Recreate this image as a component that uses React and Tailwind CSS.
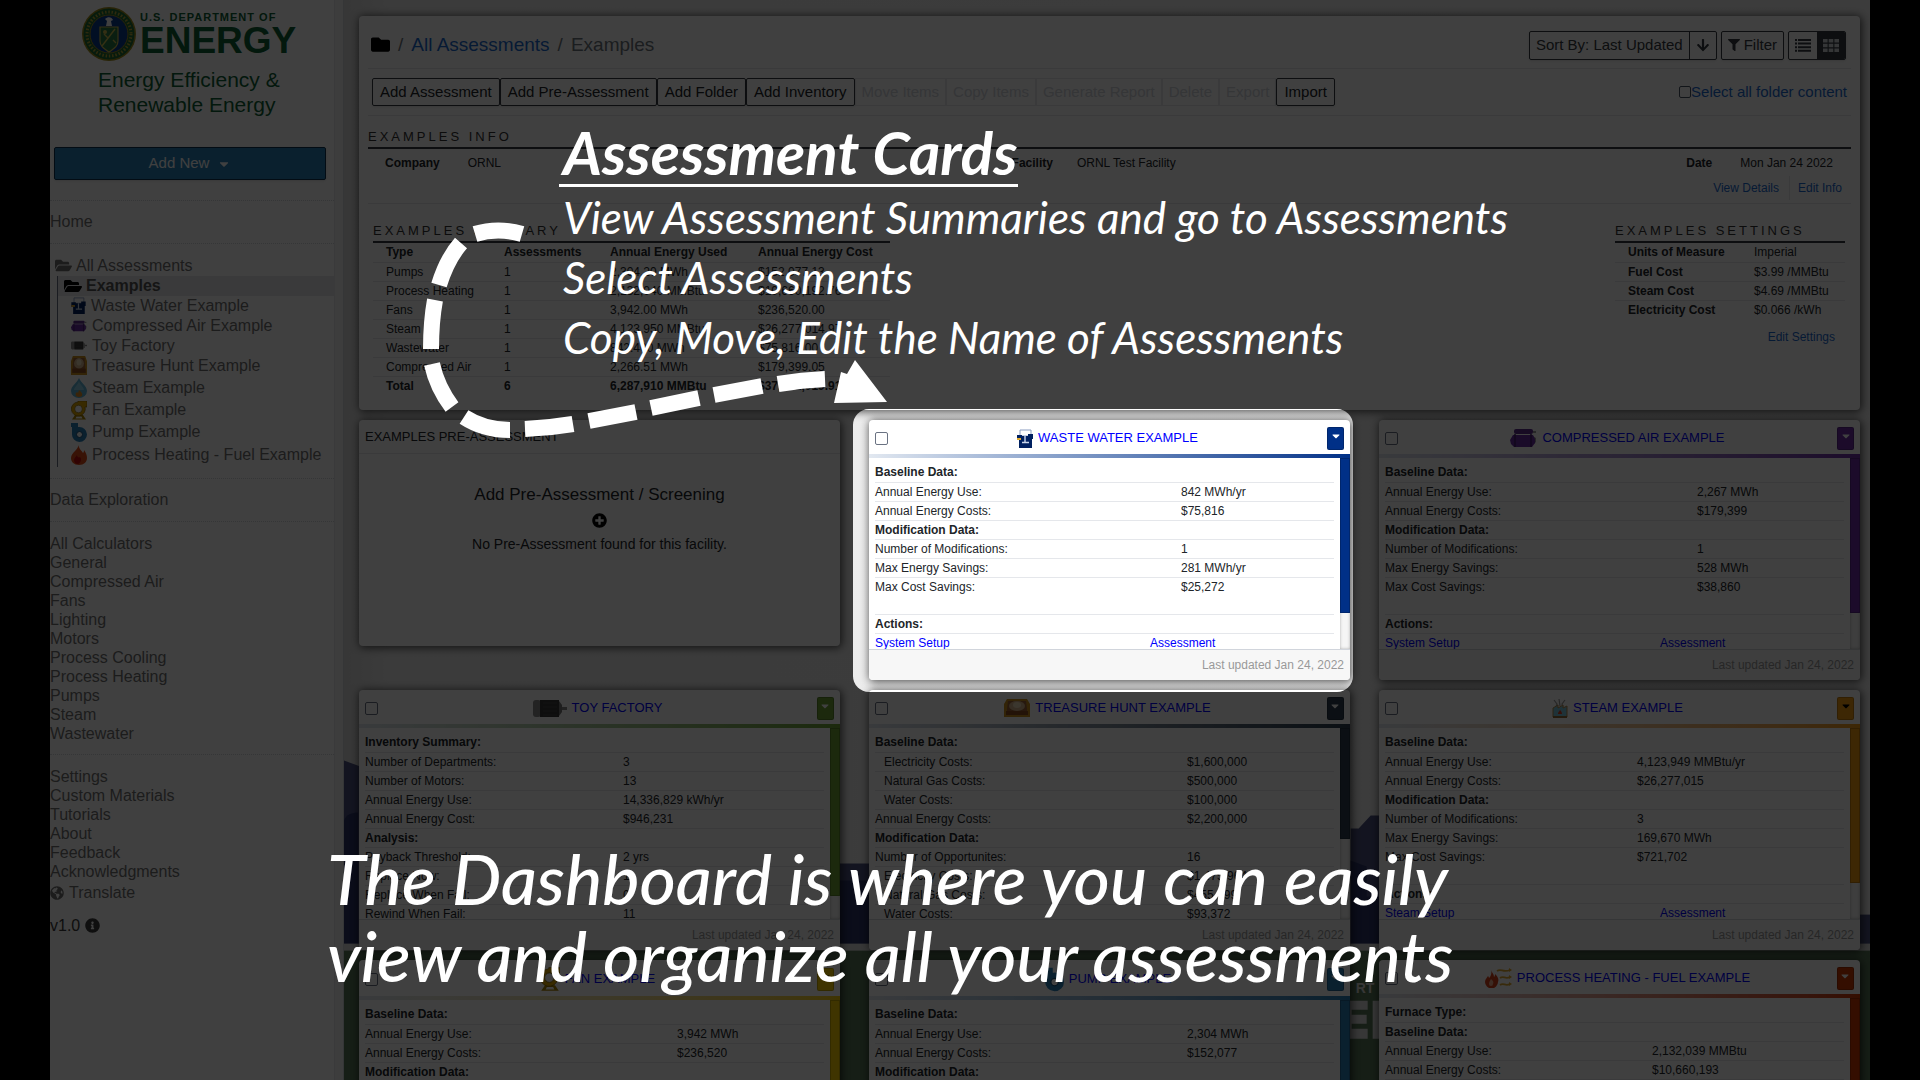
import React from "react";
import {
  FaArrowDown,
  FaCaretDown,
  FaFilter,
  FaFolder,
  FaFolderOpen,
  FaGlobeAmericas,
  FaInfoCircle,
  FaPlusCircle,
} from "react-icons/fa";

/* ---------- drawings ---------- */

function ListIcon({ className }) {
  return (
    <svg viewBox="0 0 16 13" fill="currentColor" className={className} aria-hidden="true">
      <path d="M0 0h2v2H0zM3 0h13v2H3zM0 3.600h2v2H0zM3 3.600h13v2H3zM0 7.200h2v2H0zM3 7.200h13v2H3zM0 10.800h2v2H0zM3 10.800h13v2H3z" />
    </svg>
  );
}

function GridIcon({ className }) {
  return (
    <svg viewBox="0 0 16 13" fill="currentColor" className={className} aria-hidden="true">
      <path d="M0 0h4.600v3.600H0zM5.700 0h4.600v3.600H5.700zM11.400 0H16v3.600h-4.600zM0 4.700h4.600v3.600H0zM5.700 4.700h4.600v3.600H5.700zM11.400 4.700H16v3.600h-4.600zM0 9.400h4.600V13H0zM5.700 9.400h4.600V13H5.700zM11.400 9.400H16V13h-4.600z" />
    </svg>
  );
}

function WasteIcon({ className }) {
  return (
    <svg viewBox="0 0 16 19" className={className} aria-hidden="true">
      <path d="M3 1h11v6H3z" fill="#fff" stroke="#8a9cc0" strokeWidth="1" />
      <path d="M0 6h5v1h6V5h5v5h-1v9H2v-8H0z" fill="#002060" />
      <path d="M0 9h4v2H0z" fill="#e0a92e" />
      <path d="M8 7v6M5 13.500h7" stroke="#c9d5ea" strokeWidth="1.400" />
    </svg>
  );
}

function AirIcon({ className }) {
  return (
    <svg viewBox="0 0 27 20" className={className} aria-hidden="true">
      <rect x="4" y="1" width="19" height="5" rx="2" fill="#5b2c8c" />
      <path d="M23 3h3v2h-3zM21 7l5 3v4l-2 2z" fill="#9b9b9b" />
      <path d="M3 7h20l2 4v4l-3 4H4l-3-3-1-4z" fill="#6a2fa3" />
      <path d="M5 6v13M21 6v13" stroke="#43206b" strokeWidth="1.500" />
    </svg>
  );
}

function MotorIcon({ className }) {
  return (
    <svg viewBox="0 0 34 19" className={className} aria-hidden="true">
      <rect x="0" y="1" width="8" height="17" rx="3" fill="#8a8a8a" />
      <rect x="7" y="1" width="19" height="17" fill="#3b3b3b" />
      <path d="M10 4h14M10 8h14M10 12h14M10 16h14" stroke="#484848" strokeWidth="1" />
      <path d="M26 2l3 4v7l-3 4z" fill="#777" />
      <rect x="29" y="8" width="5" height="3" fill="#888" />
    </svg>
  );
}

function TreasureIcon({ className }) {
  return (
    <svg viewBox="0 0 26 18" preserveAspectRatio="none" className={className} aria-hidden="true">
      <path d="M3 0h20l3 5v13H0V5z" fill="#c98f1c" />
      <path d="M4 2h18l1 8v5H3v-5z" fill="#9a6238" />
      <ellipse cx="13" cy="7" rx="8" ry="5" fill="#d3b48c" />
      <ellipse cx="13" cy="6" rx="4" ry="3" fill="#ecd9b8" />
      <path d="M2 12h22v4H2z" fill="#8a4d22" />
    </svg>
  );
}

function SteamDropIcon({ className }) {
  return (
    <svg viewBox="0 0 16 20" className={className} aria-hidden="true">
      <path d="M8 0c2 5 8 8 8 13a8 7 0 0 1-16 0C0 8 6 5 8 0z" fill="#5fb4d6" />
      <path d="M8 3c1 4 5 6 5 9H3c0-3 4-5 5-9z" fill="#8fd0e8" />
      <path d="M8 12c2 2 4 3 3 6a4 3 0 0 1-6 0c-1-2 0-3 1-4l1 1z" fill="#e2912b" />
    </svg>
  );
}

function SteamFactoryIcon({ className }) {
  return (
    <svg viewBox="0 0 16 19" className={className} aria-hidden="true">
      <path d="M2 1l3 4-1 3M7 0l1 7M13 1l-3 4 1 3" fill="none" stroke="#9a9a9a" strokeWidth="1.200" />
      <path d="M1 18V9l5-3v3l5-3v3l4-2v11z" fill="#7cc6dd" stroke="#b38a4b" strokeWidth="1" />
      <path d="M8 11c1 1 2 2 2 4H6c0-2 1-2 2-4z" fill="#d8402a" />
      <path d="M1 17h14v2H1z" fill="#8f6a35" />
    </svg>
  );
}

function FanIcon({ className }) {
  return (
    <svg viewBox="0 0 16 19" className={className} aria-hidden="true">
      <path d="M4 14h8l3 4.500H1z" fill="#a88200" />
      <path d="M5.500 15.500h5l1 2h-7z" fill="#fff" />
      <path d="M7 0h9v6h-2a7 7 0 1 1-7-5z" fill="#e0a800" stroke="#7a5c00" strokeWidth=".6" />
      <circle cx="7.500" cy="8" r="3.800" fill="#fff" stroke="#7a5c00" strokeWidth=".6" />
    </svg>
  );
}

function PumpIcon({ className }) {
  return (
    <svg viewBox="0 0 16 19" className={className} aria-hidden="true">
      <path d="M0 0h7v4h1a7.500 7.500 0 1 1-7 7V4H0z" fill="#2980b9" />
      <circle cx="8.500" cy="11.500" r="3" fill="#fff" stroke="#14507a" strokeWidth="1" />
    </svg>
  );
}

function FlameIcon({ className }) {
  return (
    <svg viewBox="0 0 16 20" className={className} aria-hidden="true">
      <path d="M8 0c-1 3 3 6 4 8 1-1 1-2 1-3 2 3 3 5 3 8 0 4-3 7-8 7s-8-3-8-7c0-3 2-5 4-7 2-2 3-4 4-6z" fill="#e04e1b" />
      <path d="M6 10c0 2 2 3 3 2 2 2 1 6-2 7-3 0-4-2-4-4s2-3 3-5z" fill="#c40d0d" />
    </svg>
  );
}

function FlameHeatIcon({ className }) {
  return (
    <svg viewBox="0 0 27 20" className={className} aria-hidden="true">
      <path d="M6 2c1 3 3 4 3 7 1-1 1-2 1-3 3 3 4 5 3 8a6.500 6.500 0 0 1-13 0c0-3 2-4 3-6 1 1 1 2 1 2 2-2 3-5 2-8z" fill="#d8421b" />
      <path d="M6 11c2 2 3 3 2 5a2 2 0 0 1-4 0c0-2 1-3 2-5z" fill="#f3b08f" />
      <path d="M12 3c4-3 6 2 13-1M15 10c4-3 5 2 10-1M15 17c4-3 5 2 10-1" fill="none" stroke="#e0a92e" strokeWidth="1.800" />
      <path d="M24 0l3 2-3 2zM24 7l3 2-3 2zM24 14l3 2-3 2z" fill="#e0a92e" />
    </svg>
  );
}

function Seal() {
  return (
    <svg viewBox="0 0 54 54" className="size-[54px] shrink-0" aria-hidden="true">
      <circle cx="27" cy="27" r="27" fill="#a08c1c" />
      <circle cx="27" cy="27" r="25.500" fill="#1e6b34" />
      <circle cx="27" cy="27" r="22" fill="none" stroke="#b8a536" strokeWidth="3" strokeDasharray="1.500 1.800" />
      <circle cx="27" cy="27" r="19" fill="#0b3d91" stroke="#a08c1c" strokeWidth="1" />
      <path d="M23 12c3-3 7-2 8 1l-2 1 1 5h-6l1-5z" fill="#fff" />
      <path d="M18 20h18v14c0 6-5 8-9 11-4-3-9-5-9-11z" fill="#2a7a45" stroke="#d0bd50" strokeWidth="1.200" />
      <path d="M20 39l13-17M22 27l4 4M31 33l3 3" stroke="#d0bd50" strokeWidth="1.400" />
      <circle cx="23" cy="25" r="2" fill="#d0bd50" />
    </svg>
  );
}

function Backdrop() {
  return (
    <svg
      viewBox="0 0 1525 1080"
      preserveAspectRatio="xMinYMin slice"
      className="absolute inset-0 h-full w-full"
      aria-hidden="true"
    >
      <defs>
        <linearGradient id="sky" x1="0" x2="1" y1="0" y2="0">
          <stop offset="0" stopColor="#dadada" />
          <stop offset=".03" stopColor="#ebebeb" />
          <stop offset="1" stopColor="#efefef" />
        </linearGradient>
      </defs>
      <rect width="1525" height="1080" fill="url(#sky)" />
      <path d="M0 760l60 22v165H0z" fill="#4c5280" />
      <path d="M0 820c2-6 8-8 14-8v135H0z" fill="#2c3468" />
      <path d="M490 863h40v84h-40zM1006 828h8l12-13h24v132h-44z" fill="#4c5280" />
      <path d="M490 880h40v67h-40zM1006 860l16 6v30h20v51h-36z" fill="#2c3468" />
      <path d="M1515 914h20v33h-20z" fill="#4c5280" />
      <rect y="943" width="1535" height="7" fill="#dcdcdc" />
      <rect y="950" width="1535" height="130" fill="#587858" />
      <text x="1011" y="992" fill="#dcdcdc" fontFamily="Liberation Sans, sans-serif" fontWeight="700" fontSize="14">
        RT
      </text>
      <path d="M1000 1000h23v9h-16v5h15v9h-15v5h16v10h-23zM1028 1000h20v38h-20z" fill="#dcdcdc" />
    </svg>
  );
}

const DASHES = [
  "M522 234Q498 227 475 234",
  "M461 243Q447 259 439 285",
  "M435 300Q431 322 431 349",
  "M432 364Q437 387 452 407",
  "M464 417Q484 430 510 430",
  "M525 429Q549 428 573 424",
  "M589 421L636 412",
  "M651 408L699 398",
  "M714 395L762 386",
  "M778 384Q802 380 825 379",
];

function Arrow() {
  return (
    <svg viewBox="400 210 500 240" className="absolute left-[350px] top-[210px] h-[240px] w-[500px]" aria-hidden="true">
      <g fill="none" stroke="#fff" strokeWidth="16">
        {DASHES.map((d) => (
          <path key={d} d={d} />
        ))}
      </g>
      <path d="M855 360L887 402L834 403L841 372L847 374Z" fill="#fff" />
    </svg>
  );
}

/* ---------- sidebar ---------- */

const TREE = [
  { name: "Waste Water Example", Icon: WasteIcon, row: "h-[19px]", icon: "h-[17px] w-[15px]" },
  { name: "Compressed Air Example", Icon: AirIcon, row: "h-[21px]", icon: "h-[12px] w-[16px]" },
  { name: "Toy Factory", Icon: MotorIcon, row: "h-[19px]", icon: "h-[9px] w-[16px]" },
  { name: "Treasure Hunt Example", Icon: TreasureIcon, row: "h-[21px]", icon: "h-[19px] w-[16px]" },
  { name: "Steam Example", Icon: SteamDropIcon, row: "h-[23px]", icon: "h-[20px] w-[16px]" },
  { name: "Fan Example", Icon: FanIcon, row: "h-[22px]", icon: "h-[19px] w-[16px]" },
  { name: "Pump Example", Icon: PumpIcon, row: "h-[22px]", icon: "h-[19px] w-[16px]" },
  { name: "Process Heating - Fuel Example", Icon: FlameIcon, row: "h-[23px]", icon: "h-[20px] w-[16px]" },
];

const CALCULATORS = [
  "All Calculators",
  "General",
  "Compressed Air",
  "Fans",
  "Lighting",
  "Motors",
  "Process Cooling",
  "Process Heating",
  "Pumps",
  "Steam",
  "Wastewater",
];

const PAGES = ["Settings", "Custom Materials", "Tutorials", "About", "Feedback", "Acknowledgments"];

function Sidebar() {
  return (
    <aside className="flex w-[294px] shrink-0 border-r border-gray-300 bg-[#f4f4f4]">
      <div className="w-[285px] border-r border-gray-200 bg-white text-base text-[#727272]">
        <div className="flex h-[147px] flex-col pl-8 pt-[7px] text-[#0d6135]">
          <div className="flex gap-1">
            <Seal />
            <div className="pt-[5px] font-bold">
              <div className="whitespace-nowrap text-[11px] leading-[11px] tracking-[1px]">U.S. DEPARTMENT OF</div>
              <div className="text-[37px] leading-[36px]">ENERGY</div>
            </div>
          </div>
          <div className="pl-4 pt-1.5 text-[21px] leading-[25px]">
            Energy Efficiency &amp;
            <br />
            Renewable Energy
          </div>
        </div>
        <div className="pl-1 pr-2">
          <button className="flex h-[33px] w-full items-center justify-center gap-2 rounded-xs border border-[#0f3350] bg-[#2980b9] text-[15px] text-white shadow">
            Add New <FaCaretDown className="size-3.5" />
          </button>
        </div>
        <nav className="pt-5">
          <div className="border-t border-dotted border-gray-300 py-[11px] leading-5">
            <a href="#home">Home</a>
          </div>
          <div className="border-t border-dotted border-gray-300 py-[11px]">
            <a href="#all" className="flex h-[21px] items-center gap-1 pl-[5px]">
              <FaFolderOpen className="size-[17px]" />
              All Assessments
            </a>
            <div className="ml-[7px] border-l border-gray-500 pb-px">
              <a href="#examples" className="flex h-5 items-center gap-1 bg-gray-200 pl-1.5 font-bold text-[#555]">
                <FaFolderOpen className="size-[18px] text-black" />
                Examples
              </a>
              {TREE.map(({ name, Icon, row, icon }) => (
                <a key={name} href="#item" className="flex items-center gap-[5px] whitespace-nowrap pl-[13px]">
                  <Icon className={icon} />
                  <span className={`${row} flex items-center`}>{name}</span>
                </a>
              ))}
            </div>
          </div>
          <div className="border-t border-dotted border-gray-300 pb-[11px] pt-[11px] leading-5">
            <a href="#data">Data Exploration</a>
          </div>
          <div className="border-t border-dotted border-gray-300 pb-[11px] pt-3 leading-[19px]">
            {CALCULATORS.map((c) => (
              <a key={c} href="#calc" className="block">
                {c}
              </a>
            ))}
          </div>
          <div className="border-t border-dotted border-gray-300 pt-3 leading-[19px]">
            {PAGES.map((p) => (
              <a key={p} href="#page" className="block">
                {p}
              </a>
            ))}
            <a href="#translate" className="flex items-center gap-[5px] pt-0.5">
              <FaGlobeAmericas className="size-[14px]" /> Translate
            </a>
          </div>
          <div className="flex items-center gap-[5px] pt-3.5 leading-[19px] text-[#3c3c3c]">
            v1.0 <FaInfoCircle className="size-[15px]" />
          </div>
        </nav>
      </div>
    </aside>
  );
}

/* ---------- folder panel ---------- */

const TOOLS = [
  ["Add Assessment", true],
  ["Add Pre-Assessment", true],
  ["Add Folder", true],
  ["Add Inventory", true],
  ["Move Items", false],
  ["Copy Items", false],
  ["Generate Report", false],
  ["Delete", false],
  ["Export", false],
  ["Import", true],
];

const SUMMARY = [
  ["Pumps", "1", "2,304.20 MWh", "$152,077.13"],
  ["Process Heating", "1", "2,132,040 MMBtu", "$10,660,192.76"],
  ["Fans", "1", "3,942.00 MWh", "$236,520.00"],
  ["Steam", "1", "4,123,950 MMBtu", "$26,277,014.97"],
  ["Wastewater", "1", "842.400 MWh", "$75,816.00"],
  ["Compressed Air", "1", "2,266.51 MWh", "$179,399.05"],
];

const SETTINGS = [
  ["Units of Measure", "Imperial"],
  ["Fuel Cost", "$3.99 /MMBtu"],
  ["Steam Cost", "$4.69 /MMBtu"],
  ["Electricity Cost", "$0.066 /kWh"],
];

function SectionTitle({ children }) {
  return (
    <h2 className="border-b-2 border-[#343a40] pb-0.5 text-[13px] leading-4 tracking-[3px] text-[#333]">{children}</h2>
  );
}

function FolderPanel() {
  return (
    <section className="h-[394px] rounded bg-white px-[9px] text-xs text-[#212529] shadow-[1px_1px_8px_1px_rgba(0,0,0,0.65)]">
      <header className="flex h-[53px] items-center justify-between border-b border-gray-200 pl-[3px] pr-[5px] pt-1.5">
        <div className="flex items-center gap-2 text-[19px] text-[#6c757d]">
          <FaFolder className="size-[19px] text-black" />
          <span>/</span>
          <a href="#all" className="text-[#1a6ad0]">
            All Assessments
          </a>
          <span>/</span>
          <span>Examples</span>
        </div>
        <div className="flex h-[29px] gap-1 text-[15px] text-[#343a40]">
          <div className="flex rounded-xs border border-[#343a40] shadow">
            <button className="border-r border-[#343a40] px-1.5">Sort By: Last Updated</button>
            <button className="px-1.5" aria-label="Sort direction">
              <FaArrowDown className="size-[14px]" />
            </button>
          </div>
          <button className="flex items-center gap-1 rounded-xs border border-[#343a40] px-1.5 shadow">
            <FaFilter className="size-3" /> Filter
          </button>
          <div className="flex overflow-hidden rounded-xs border border-[#343a40] shadow">
            <button className="px-1.5" aria-label="List view">
              <ListIcon className="h-[13px] w-4" />
            </button>
            <button className="bg-[#343a40] px-1.5 text-gray-300" aria-label="Grid view">
              <GridIcon className="h-[13px] w-4" />
            </button>
          </div>
        </div>
      </header>
      <div className="flex h-[47px] items-center justify-between border-b border-gray-200 pl-1 pr-1 text-[15px]">
        <div className="flex">
          {TOOLS.map(([label, on]) => (
            <button
              key={label}
              disabled={!on}
              className={
                on
                  ? "h-7 rounded-xs border border-[#343a40] px-[7px] shadow"
                  : "h-7 border border-gray-200 px-1.5 text-gray-300"
              }
            >
              {label}
            </button>
          ))}
        </div>
        <label className="flex items-center text-[#1a6ad0]">
          <input type="checkbox" className="size-3 appearance-none rounded-xs border border-gray-600" />
          Select all folder content
        </label>
      </div>
      <div className="border-b border-gray-200 pt-[13px]">
        <SectionTitle>EXAMPLES INFO</SectionTitle>
        <div className="flex h-[27px] items-center justify-between pl-[17px] pr-[18px]">
          <dl className="flex gap-7">
            <dt className="font-bold">Company</dt>
            <dd>ORNL</dd>
          </dl>
          <dl className="flex gap-6">
            <dt className="font-bold">Facility</dt>
            <dd>ORNL Test Facility</dd>
          </dl>
          <dl className="flex gap-7">
            <dt className="font-bold">Date</dt>
            <dd>Mon Jan 24 2022</dd>
          </dl>
        </div>
        <div className="flex h-[27px] items-start justify-end pr-[9px] leading-6 text-[#1a6ad0]">
          <a href="#details" className="border-r border-gray-200 pr-2.5">
            View Details
          </a>
          <a href="#info" className="pl-2">
            Edit Info
          </a>
        </div>
      </div>
      <div className="flex items-start justify-between pl-[5px] pr-1.5 pt-[19px]">
        <div className="w-[517px]">
          <SectionTitle>EXAMPLES SUMMARY</SectionTitle>
          <table className="w-full table-fixed text-left">
            <colgroup>
              <col className="w-[118px]" />
              <col className="w-[106px]" />
              <col className="w-[148px]" />
              <col />
            </colgroup>
            <thead>
              <tr className="h-[19px] border-b border-gray-200 leading-[18px]">
                {["Type", "Assessments", "Annual Energy Used", "Annual Energy Cost"].map((h) => (
                  <th key={h} className="whitespace-nowrap p-0 pl-[13px]">
                    {h}
                  </th>
                ))}
              </tr>
            </thead>
            <tbody>
              {SUMMARY.map((r) => (
                <tr key={r[0]} className="h-[19px] border-b border-gray-200 leading-[18px]">
                  {r.map((c, i) => (
                    <td key={i} className="p-0 pl-[13px]">
                      {c}
                    </td>
                  ))}
                </tr>
              ))}
              <tr className="h-[19px] font-bold leading-[18px]">
                {["Total", "6", "6,287,910 MMBtu", "$37,581,019.91"].map((c) => (
                  <td key={c} className="p-0 pl-[13px]">
                    {c}
                  </td>
                ))}
              </tr>
            </tbody>
          </table>
        </div>
        <div className="w-[230px]">
          <SectionTitle>EXAMPLES SETTINGS</SectionTitle>
          <table className="w-full table-fixed text-left">
            <tbody>
              {SETTINGS.map(([k, v]) => (
                <tr key={k} className="h-[19px] border-b border-gray-200 leading-[18px] last:border-0">
                  <th className="w-[126px] p-0 pl-[13px]">{k}</th>
                  <td className="p-0 pl-[13px]">{v}</td>
                </tr>
              ))}
            </tbody>
          </table>
          <a href="#settings" className="block pr-2.5 pt-2.5 text-right text-[#1a6ad0]">
            Edit Settings
          </a>
        </div>
      </div>
    </section>
  );
}

/* ---------- cards ---------- */

const CARDS = [
  {
    title: "WASTE WATER EXAMPLE",
    Icon: WasteIcon,
    icon: "h-[19px] w-4",
    head: "h-[34px]",
    fill: "bg-[#003087]",
    bar: "to-[#003087]",
    caret: "text-white",
    thumb: "h-[155px]",
    col: "w-[306px]",
    spotlight: true,
    rows: [
      ["Baseline Data:"],
      ["Annual Energy Use:", "842 MWh/yr"],
      ["Annual Energy Costs:", "$75,816"],
      ["Modification Data:"],
      ["Number of Modifications:", "1"],
      ["Max Energy Savings:", "281 MWh/yr"],
      ["Max Cost Savings:", "$25,272"],
    ],
    setup: "System Setup",
  },
  {
    title: "COMPRESSED AIR EXAMPLE",
    Icon: AirIcon,
    icon: "h-5 w-[27px]",
    head: "h-[34px]",
    fill: "bg-[#702fa8]",
    bar: "to-[#702fa8]",
    caret: "text-white",
    thumb: "h-[155px]",
    col: "w-[312px]",
    rows: [
      ["Baseline Data:"],
      ["Annual Energy Use:", "2,267 MWh"],
      ["Annual Energy Costs:", "$179,399"],
      ["Modification Data:"],
      ["Number of Modifications:", "1"],
      ["Max Energy Savings:", "528 MWh"],
      ["Max Cost Savings:", "$38,860"],
    ],
    setup: "System Setup",
  },
  {
    title: "TOY FACTORY",
    Icon: MotorIcon,
    icon: "h-[19px] w-[34px]",
    head: "h-[34px]",
    fill: "bg-[#6fa534]",
    bar: "to-[#6fa534]",
    caret: "text-white",
    thumb: "h-[168px]",
    col: "w-[258px]",
    rows: [
      ["Inventory Summary:"],
      ["Number of Departments:", "3"],
      ["Number of Motors:", "13"],
      ["Annual Energy Use:", "14,336,829 kWh/yr"],
      ["Annual Energy Cost:", "$946,231"],
      ["Analysis:"],
      ["Payback Threshold:", "2 yrs"],
      ["Replace Now:", "1"],
      ["Replace When Fail:", "0"],
      ["Rewind When Fail:", "11"],
    ],
  },
  {
    title: "TREASURE HUNT EXAMPLE",
    Icon: TreasureIcon,
    icon: "h-[18px] w-[26px]",
    head: "h-[34px]",
    fill: "bg-[#2c3e50]",
    bar: "to-[#2c3e50]",
    caret: "text-white",
    thumb: "h-[111px]",
    col: "w-[312px]",
    rows: [
      ["Baseline Data:"],
      ["Electricity Costs:", "$1,600,000", true],
      ["Natural Gas Costs:", "$500,000", true],
      ["Water Costs:", "$100,000", true],
      ["Annual Energy Costs:", "$2,200,000"],
      ["Modification Data:"],
      ["Number of Opportunites:", "16"],
      ["Electricity Costs:", "$1,475,904", true],
      ["Natural Gas Costs:", "$455,999", true],
      ["Water Costs:", "$93,372", true],
    ],
  },
  {
    title: "STEAM EXAMPLE",
    Icon: SteamFactoryIcon,
    icon: "h-[19px] w-4",
    head: "h-[34px]",
    fill: "bg-[#f39c12]",
    bar: "to-[#f39c12]",
    caret: "text-black",
    thumb: "h-[155px]",
    col: "w-[252px]",
    rows: [
      ["Baseline Data:"],
      ["Annual Energy Use:", "4,123,949 MMBtu/yr"],
      ["Annual Energy Costs:", "$26,277,015"],
      ["Modification Data:"],
      ["Number of Modifications:", "3"],
      ["Max Energy Savings:", "169,670 MWh"],
      ["Max Cost Savings:", "$721,702"],
    ],
    setup: "Steam Setup",
  },
  {
    title: "FAN EXAMPLE",
    Icon: FanIcon,
    icon: "h-[25px] w-5",
    head: "h-9",
    fill: "bg-[#fad000]",
    bar: "to-[#fad000]",
    caret: "text-black",
    thumb: "h-[155px]",
    col: "w-[312px]",
    rows: [
      ["Baseline Data:"],
      ["Annual Energy Use:", "3,942 MWh"],
      ["Annual Energy Costs:", "$236,520"],
      ["Modification Data:"],
    ],
  },
  {
    title: "PUMP EXAMPLE",
    Icon: PumpIcon,
    icon: "h-[25px] w-5",
    head: "h-9",
    fill: "bg-[#2980b9]",
    bar: "to-[#2980b9]",
    caret: "text-white",
    thumb: "h-[155px]",
    col: "w-[312px]",
    rows: [
      ["Baseline Data:"],
      ["Annual Energy Use:", "2,304 MWh"],
      ["Annual Energy Costs:", "$152,077"],
      ["Modification Data:"],
    ],
  },
  {
    title: "PROCESS HEATING - FUEL EXAMPLE",
    Icon: FlameHeatIcon,
    icon: "h-5 w-[27px]",
    head: "h-[34px]",
    fill: "bg-[#d03a00]",
    bar: "to-[#d03a00]",
    caret: "text-white",
    thumb: "h-[155px]",
    col: "w-[267px]",
    rows: [
      ["Furnace Type:"],
      ["Baseline Data:"],
      ["Annual Energy Use:", "2,132,039 MMBtu"],
      ["Annual Energy Costs:", "$10,660,193"],
    ],
  },
];

const ROW = "h-[19px] border-b border-gray-200 leading-[18px]";

function Card({ title, Icon, icon, head, fill, bar, caret, thumb, col, rows, setup, spotlight }) {
  return (
    <article className="relative h-[260px]">
      <div className="flex h-full flex-col overflow-hidden rounded bg-white text-xs text-[#212529] shadow-[1px_1px_8px_1px_rgba(0,0,0,0.65)]">
        <header className={`${head} flex shrink-0 items-center justify-between px-1.5 pt-0.5`}>
          <input
            type="checkbox"
            aria-label={`Select ${title}`}
            className="size-[13px] appearance-none rounded-xs border border-gray-500 bg-white"
          />
          <a href="#card" className="flex items-center gap-[5px] text-[13px] text-[#0000ff]">
            <Icon className={icon} />
            {title}
          </a>
          <button
            aria-label={`${title} menu`}
            className={`${fill} ${caret} flex h-[23px] w-[17px] items-center justify-center rounded-xs border border-black/20 pb-1`}
          >
            <FaCaretDown className="size-3" />
          </button>
        </header>
        <div className={`${bar} h-1 shrink-0 bg-linear-to-r from-slate-200`} />
        <div className="flex min-h-0 grow overflow-hidden">
          <div className="grow overflow-hidden px-1.5 pt-[5px]">
            <table className="w-full table-fixed text-left">
              <tbody>
                {rows.map(([k, v, indent], i) =>
                  v ? (
                    <tr key={i} className={ROW}>
                      <td className={`${col} p-0 ${setup && i === rows.length - 1 ? "pb-[18px]" : ""} ${indent ? "pl-[9px]" : ""}`}>
                        {k}
                      </td>
                      <td className="p-0 align-top">{v}</td>
                    </tr>
                  ) : (
                    <tr key={i} className={ROW}>
                      <th className={`${col} p-0`}>{k}</th>
                      <td className="p-0" />
                    </tr>
                  )
                )}
              </tbody>
            </table>
            {setup && (
              <div>
                <div className={`${ROW} font-bold`}>Actions:</div>
                <div className="grid grid-cols-[275px_1fr] leading-[18px] text-[#0000ff]">
                  <a href="#setup">{setup}</a>
                  <a href="#assessment">Assessment</a>
                </div>
              </div>
            )}
          </div>
          <div className="w-2.5 shrink-0 bg-[#f5f5f5] shadow-[inset_0_0_3px_rgba(0,0,0,0.3)]">
            <div className={`${fill} ${thumb} border border-black/20`} />
          </div>
        </div>
        <footer className="h-[31px] shrink-0 border-t border-gray-300 bg-[#f7f7f7] px-1.5 text-right leading-[30px] text-[#999]">
          Last updated Jan 24, 2022
        </footer>
      </div>
      {spotlight && (
        <div className="pointer-events-none absolute -bottom-3 -left-4 -right-[3px] -top-[11px] z-10 rounded-2xl shadow-[0_0_0_2000px_rgba(0,0,0,0.75)]" />
      )}
    </article>
  );
}

function PreAssessmentCard() {
  return (
    <article className="h-[226px] rounded bg-white text-center text-[#212529] shadow-[1px_1px_8px_1px_rgba(0,0,0,0.65)]">
      <h3 className="h-[34px] border-b border-gray-200 px-1.5 text-left text-[13px] leading-[34px]">
        EXAMPLES PRE-ASSESSMENT
      </h3>
      <div className="pt-[29px] text-[17px] leading-6">Add Pre-Assessment / Screening</div>
      <button aria-label="Add pre-assessment" className="block w-full pt-1.5 text-black">
        <FaPlusCircle className="mx-auto size-[15px]" />
      </button>
      <p className="pt-1.5 text-[14px] leading-5">No Pre-Assessment found for this facility.</p>
    </article>
  );
}

/* ---------- tutorial captions ---------- */

function Captions() {
  return (
    <div className="pointer-events-none absolute inset-0 z-20 font-['Ink_Free','Lato',sans-serif] italic text-white">
      <Arrow />
      <div className="absolute left-[509px] top-[120px] whitespace-nowrap">
        <h1 className="w-fit border-b-[3px] border-white pl-1 text-[60px] font-bold leading-[64px]">Assessment Cards</h1>
        <div className="pl-1 text-[44px] leading-[60px]">
          <p>View Assessment Summaries and go to Assessments</p>
          <p>Select Assessments</p>
          <p>Copy, Move, Edit the Name of Assessments</p>
        </div>
      </div>
      <p className="absolute left-[277px] top-[840px] whitespace-nowrap text-[70px] font-medium leading-[77px]">
        The Dashboard is where you can easily
        <br />
        view and organize all your assessments
      </p>
    </div>
  );
}

export default function App() {
  return (
    <div className="h-screen bg-black px-[50px] font-['Liberation_Sans',Arial,sans-serif]">
      <div className="relative flex h-full overflow-hidden">
        <Sidebar />
        <div className="relative min-w-0 grow">
          <Backdrop />
          <main className="relative flex flex-col gap-2.5 pl-[15px] pr-2.5 pt-4">
            <FolderPanel />
            <div className="grid grid-cols-3 gap-x-[29px] gap-y-2.5">
              <PreAssessmentCard />
              {CARDS.map((c) => (
                <Card key={c.title} {...c} />
              ))}
            </div>
          </main>
        </div>
        <Captions />
      </div>
    </div>
  );
}
